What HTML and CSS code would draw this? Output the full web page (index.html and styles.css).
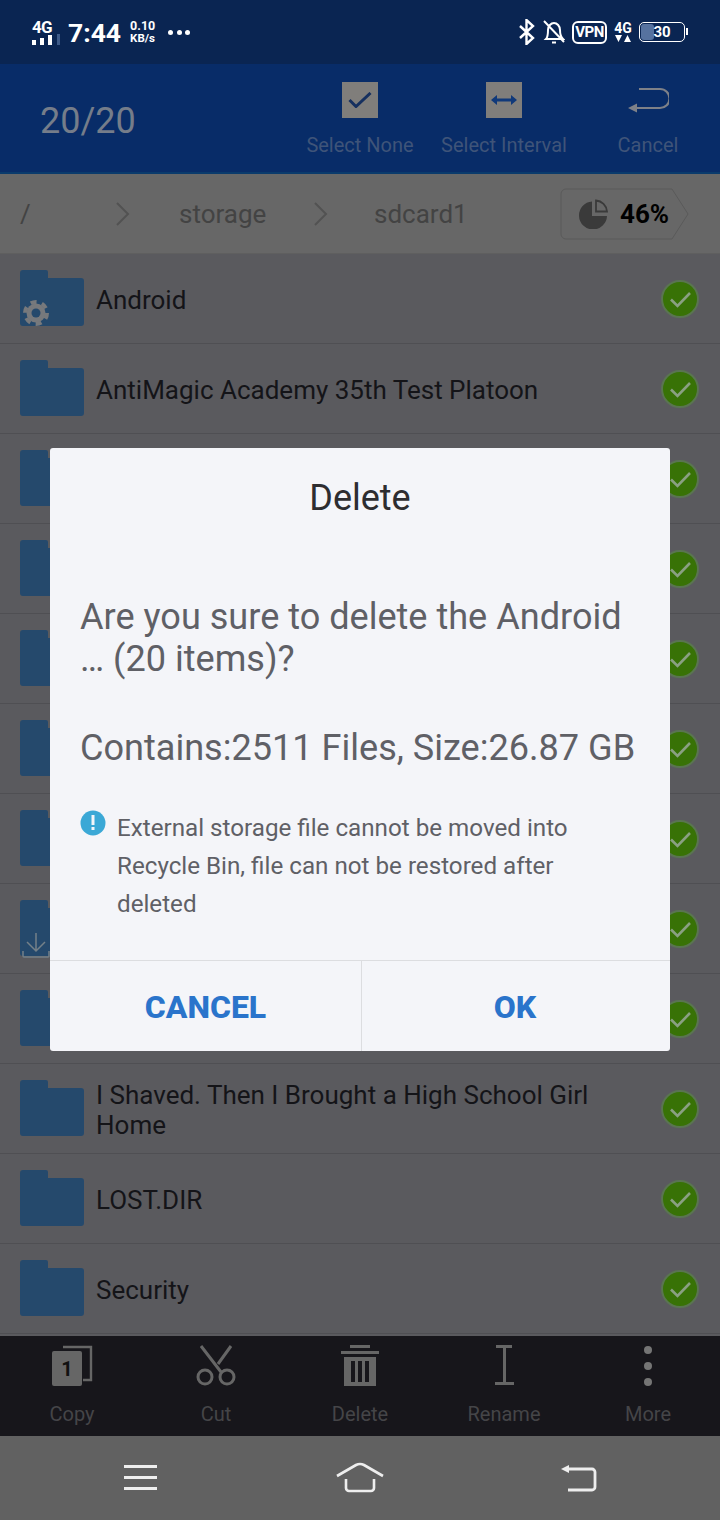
FILE: index.html
```html
<!DOCTYPE html>
<html lang="en">
<head>
  <meta charset="UTF-8">
  <meta name="viewport" content="width=device-width, initial-scale=1">
  <title>File manager - Delete</title>
  <link rel="stylesheet" href="styles.css">
</head>
<body>
  <svg class="defs" width="0" height="0">
    <symbol id="folder" viewBox="0 0 64 56">
      <path d="M3 0h23a2 2 0 0 1 2 2v6h33a3 3 0 0 1 3 3v42a3 3 0 0 1-3 3H3a3 3 0 0 1-3-3V3a3 3 0 0 1 3-3z" fill="#25496c"/>
    </symbol>
    <symbol id="tick" viewBox="0 0 38 38">
      <circle cx="19" cy="19" r="18" fill="#387206" stroke="#5a7551" stroke-width="2"/>
      <path d="M10 19.500l6.500 6.500L29 13" fill="none" stroke="#8aa082" stroke-width="2.600"/>
    </symbol>
  </svg>

  <div class="phone">
    <!-- STATUS BAR -->
    <div class="status">
      <div class="net">
        <span class="net-label">4G</span>
        <svg width="28" height="11" viewBox="0 0 28 11">
          <rect x="0" y="6" width="4" height="5" fill="#fff"/>
          <rect x="8" y="4" width="4" height="7" fill="#fff"/>
          <rect x="16" y="1" width="4" height="10" fill="#fff"/>
          <rect x="25" y="0" width="3" height="11" fill="#3d5a88"/>
        </svg>
      </div>
      <span class="clock">7:44</span>
      <div class="speed"><span>0.10</span><span class="speed-unit">KB/s</span></div>
      <div class="dots"><i></i><i></i><i></i></div>
      <div class="status-right">
        <svg width="18" height="26" viewBox="0 0 18 26" fill="none" stroke="#fff" stroke-width="2.400">
          <path d="M2 7l13 12-6.500 6V1L15 7 2 19"/>
        </svg>
        <svg width="22" height="26" viewBox="0 0 22 26" fill="none" stroke="#fff" stroke-width="2">
          <path d="M3 20c2-2 2-4 2-9 0-4 3-7 6-7s6 3 6 7c0 5 1 7 3 9zM9 23.500h4M1 2l20 21"/>
        </svg>
        <span class="vpn">VPN</span>
        <div class="net-small">
          <span>4G</span>
          <svg width="18" height="7" viewBox="0 0 18 7"><path d="M1 0h7L4.500 7zM10 7h7l-3.500-7z" fill="#fff"/></svg>
        </div>
        <div class="battery"><div class="battery-fill"></div><span class="battery-num">30</span></div>
      </div>
    </div>

    <!-- SELECTION TOOLBAR -->
    <div class="toolbar">
      <div class="count">20/20</div>
      <div class="tool">
        <div class="tool-box">
          <svg width="24" height="16" viewBox="0 0 24 16" fill="none" stroke="#16305f" stroke-width="3"><path d="M1.500 8l6.500 6.500L22.500 1"/></svg>
        </div>
        <span>Select None</span>
      </div>
      <div class="tool">
        <div class="tool-box">
          <svg width="26" height="10" viewBox="0 0 26 10" fill="#10397a"><path d="M0 5l6-5v3.500h14V0l6 5-6 5V6.500H6V10z"/></svg>
        </div>
        <span>Select Interval</span>
      </div>
      <div class="tool">
        <svg class="tool-icon" width="42" height="36" viewBox="0 0 42 36" fill="none" stroke="#7e8188" stroke-width="2.200">
          <path d="M8 26h25a9.500 9.500 0 0 0 0-19H12"/>
          <path d="M1 26l9-4.500v9z" fill="#7e8188" stroke="none"/>
        </svg>
        <span>Cancel</span>
      </div>
    </div>

    <!-- BREADCRUMB -->
    <div class="crumbs">
      <span class="crumb crumb-root">/</span>
      <svg class="chev" width="14" height="24" viewBox="0 0 14 24" fill="none" stroke="#525252" stroke-width="2"><path d="M1 1l11 11L1 23"/></svg>
      <span class="crumb crumb-storage">storage</span>
      <svg class="chev" width="14" height="24" viewBox="0 0 14 24" fill="none" stroke="#525252" stroke-width="2"><path d="M1 1l11 11L1 23"/></svg>
      <span class="crumb crumb-card">sdcard1</span>
      <div class="usage">
        <svg class="usage-tag" width="130" height="52" viewBox="0 0 130 52" fill="none" stroke="#5a5a5a" stroke-width="1">
          <path d="M6 1h106l16 25-16 25H6a5 5 0 0 1-5-5V6a5 5 0 0 1 5-5z"/>
        </svg>
        <svg width="30" height="30" viewBox="0 0 30 30">
          <path d="M13 2.500A14 14 0 1 0 28 17H13z" fill="#3a3a3a"/>
          <path d="M17 1.500v11h11A12 12 0 0 0 17 1.500z" fill="none" stroke="#3a3a3a" stroke-width="1.800"/>
        </svg>
        <span class="usage-num">46%</span>
      </div>
    </div>

    <!-- FILE LIST -->
    <div class="list">
      <div class="row">
        <div class="folder">
          <svg width="64" height="56"><use href="#folder"/></svg>
          <svg class="badge-gear" width="28" height="28" viewBox="0 0 28 28">
            <circle cx="14" cy="14" r="9.500" fill="#77797c"/>
            <circle cx="14" cy="14" r="11" fill="none" stroke="#77797c" stroke-width="4" stroke-dasharray="6 5.520"/>
            <circle cx="14" cy="14" r="4.500" fill="#25496c"/>
          </svg>
        </div>
        <span class="name">Android</span>
        <svg class="tick" width="38" height="38"><use href="#tick"/></svg>
      </div>
      <div class="row">
        <div class="folder"><svg width="64" height="56"><use href="#folder"/></svg></div>
        <span class="name">AntiMagic Academy 35th Test Platoon</span>
        <svg class="tick" width="38" height="38"><use href="#tick"/></svg>
      </div>
      <div class="row">
        <div class="folder"><svg width="64" height="56"><use href="#folder"/></svg></div>
        <span class="name"></span>
        <svg class="tick" width="38" height="38"><use href="#tick"/></svg>
      </div>
      <div class="row">
        <div class="folder"><svg width="64" height="56"><use href="#folder"/></svg></div>
        <span class="name"></span>
        <svg class="tick" width="38" height="38"><use href="#tick"/></svg>
      </div>
      <div class="row">
        <div class="folder"><svg width="64" height="56"><use href="#folder"/></svg></div>
        <span class="name"></span>
        <svg class="tick" width="38" height="38"><use href="#tick"/></svg>
      </div>
      <div class="row">
        <div class="folder"><svg width="64" height="56"><use href="#folder"/></svg></div>
        <span class="name"></span>
        <svg class="tick" width="38" height="38"><use href="#tick"/></svg>
      </div>
      <div class="row">
        <div class="folder"><svg width="64" height="56"><use href="#folder"/></svg></div>
        <span class="name"></span>
        <svg class="tick" width="38" height="38"><use href="#tick"/></svg>
      </div>
      <div class="row">
        <div class="folder">
          <svg width="64" height="56"><use href="#folder"/></svg>
          <svg class="badge-down" width="28" height="26" viewBox="0 0 28 26" fill="none" stroke="#748088" stroke-width="1.500">
            <path d="M14 1v18M5 10l9 9 9-9M1 19v5a1 1 0 0 0 1 1h24a1 1 0 0 0 1-1v-5"/>
          </svg>
        </div>
        <span class="name"></span>
        <svg class="tick" width="38" height="38"><use href="#tick"/></svg>
      </div>
      <div class="row">
        <div class="folder"><svg width="64" height="56"><use href="#folder"/></svg></div>
        <span class="name"></span>
        <svg class="tick" width="38" height="38"><use href="#tick"/></svg>
      </div>
      <div class="row">
        <div class="folder"><svg width="64" height="56"><use href="#folder"/></svg></div>
        <span class="name">I Shaved. Then I Brought a High School Girl Home</span>
        <svg class="tick" width="38" height="38"><use href="#tick"/></svg>
      </div>
      <div class="row">
        <div class="folder"><svg width="64" height="56"><use href="#folder"/></svg></div>
        <span class="name">LOST.DIR</span>
        <svg class="tick" width="38" height="38"><use href="#tick"/></svg>
      </div>
      <div class="row">
        <div class="folder"><svg width="64" height="56"><use href="#folder"/></svg></div>
        <span class="name">Security</span>
        <svg class="tick" width="38" height="38"><use href="#tick"/></svg>
      </div>
    </div>

    <!-- BOTTOM ACTIONS -->
    <div class="actions">
      <div class="action">
        <svg width="44" height="44" viewBox="0 0 44 44">
          <path d="M13 2h28v33h-8" fill="none" stroke="#666" stroke-width="2.400"/>
          <rect x="2" y="6" width="30" height="35" rx="2" fill="#666"/>
          <text class="copy-num" x="17" y="31" text-anchor="middle">1</text>
        </svg>
        <span>Copy</span>
      </div>
      <div class="action">
        <svg width="44" height="44" viewBox="0 0 44 44" fill="none" stroke="#666" stroke-width="3">
          <path d="M7 1l20 26M37 1L24 19"/>
          <circle cx="11" cy="32" r="7"/>
          <circle cx="33" cy="32" r="7"/>
        </svg>
        <span>Cut</span>
      </div>
      <div class="action">
        <svg width="44" height="44" viewBox="0 0 44 44" fill="#666">
          <rect x="12" y="0" width="20" height="3"/>
          <rect x="3" y="6" width="38" height="3"/>
          <path d="M6 12h32v29H6zM13 16v21h4V16zM20 16v21h4V16zM27 16v21h4V16z" fill-rule="evenodd"/>
        </svg>
        <span>Delete</span>
      </div>
      <div class="action">
        <svg width="44" height="44" viewBox="0 0 44 44" fill="#666">
          <rect x="14" y="0" width="16" height="3"/>
          <rect x="21" y="1" width="3" height="38"/>
          <rect x="13" y="37" width="19" height="3"/>
        </svg>
        <span>Rename</span>
      </div>
      <div class="action">
        <svg width="44" height="44" viewBox="0 0 44 44" fill="#757575">
          <circle cx="22" cy="5" r="4"/>
          <circle cx="22" cy="21" r="4"/>
          <circle cx="22" cy="37" r="4"/>
        </svg>
        <span>More</span>
      </div>
    </div>

    <!-- NAV BAR -->
    <div class="nav">
      <svg class="nav-menu" width="34" height="26" viewBox="0 0 34 26" fill="#eee">
        <rect y="0" width="33" height="3"/>
        <rect y="11" width="33" height="3"/>
        <rect y="22" width="33" height="3"/>
      </svg>
      <svg width="50" height="34" viewBox="0 0 50 34" fill="none" stroke="#eee" stroke-width="2.600">
        <path d="M2 15L21 4q4-2 8 0l19 11"/>
        <path d="M11 18v9a3 3 0 0 0 3 3h22a3 3 0 0 0 3-3v-9"/>
      </svg>
      <svg width="38" height="30" viewBox="0 0 38 30" fill="none" stroke="#eee" stroke-width="2.800">
        <path d="M4 6h27a3 3 0 0 1 3 3v15a3 3 0 0 1-3 3H7"/>
        <path d="M0 6l8-4v8z" fill="#eee" stroke="none"/>
      </svg>
    </div>

    <!-- DELETE DIALOG -->
    <div class="overlay">
      <div class="dialog">
        <div class="dialog-title">Delete</div>
        <div class="dialog-body">
          <p class="question">Are you sure to delete the Android<br>… (20 items)?</p>
          <p class="contains">Contains:2511 Files, Size:26.87 GB</p>
          <div class="warning">
            <svg class="warning-icon" width="26" height="26" viewBox="0 0 26 26">
              <circle cx="13" cy="13" r="12.500" fill="#3ba8d6"/>
              <rect x="11.500" y="5" width="3" height="10" fill="#f4f5f9"/>
              <rect x="11.500" y="17" width="3" height="3" fill="#f4f5f9"/>
            </svg>
            <p>External storage file cannot be moved into Recycle Bin, file can not be restored after deleted</p>
          </div>
        </div>
        <div class="dialog-buttons">
          <div class="btn btn-cancel">CANCEL</div>
          <div class="btn btn-ok">OK</div>
        </div>
      </div>
    </div>
  </div>
</body>
</html>
```

FILE: styles.css
```css
/* Global */
* {
  box-sizing: border-box;
}
body {
  margin: 0;
  font-family: Roboto, "Liberation Sans", sans-serif;
  background: #5a5a5e;
}
p {
  margin: 0;
}
svg {
  display: block;
  flex: none;
}
.defs {
  position: absolute;
}
.phone {
  position: relative;
  width: 720px;
  height: 1520px;
  display: flex;
  flex-direction: column;
  overflow: hidden;
}

/* STATUS BAR */
.status {
  height: 64px;
  background: #0a2552;
  color: #fff;
  display: flex;
  align-items: center;
  padding: 0 35px 0 32px;
}
.net {
  width: 28px;
  display: flex;
  flex-direction: column;
}
.net-label {
  font-size: 17px;
  font-weight: 700;
  line-height: 14px;
  letter-spacing: -0.8px;
}
.clock {
  margin-left: 8px;
  font-size: 26.500px;
  font-weight: 700;
}
.speed {
  margin-left: 9px;
  display: flex;
  flex-direction: column;
  font-size: 12.500px;
  font-weight: 700;
  line-height: 13px;
}
.speed-unit {
  font-size: 11.500px;
}
.dots {
  margin-left: 13px;
  display: flex;
  gap: 3.500px;
}
.dots i {
  width: 5px;
  height: 5px;
  border-radius: 50%;
  background: #fff;
}
.status-right {
  margin-left: auto;
  display: flex;
  align-items: center;
  gap: 7px;
}
.vpn {
  width: 35px;
  text-align: center;
  border: 2px solid #fff;
  border-radius: 6px;
  font-size: 15px;
  font-weight: 700;
  line-height: 19px;
  letter-spacing: -0.5px;
}
.net-small {
  display: flex;
  flex-direction: column;
  align-items: center;
  font-size: 14px;
  font-weight: 700;
  line-height: 13px;
}
.battery {
  position: relative;
  width: 46px;
  height: 20px;
  border: 1.500px solid #fff;
  border-radius: 5px;
  display: flex;
  align-items: center;
  justify-content: center;
}
.battery::after {
  content: "";
  position: absolute;
  right: -4px;
  top: 5px;
  width: 2px;
  height: 7px;
  background: #fff;
}
.battery-fill {
  position: absolute;
  left: 1px;
  top: 1px;
  bottom: 1px;
  width: 13px;
  background: #56729f;
  border-radius: 3px;
}
.battery-num {
  position: relative;
  font-size: 15px;
  font-weight: 700;
}

/* SELECTION TOOLBAR */
.toolbar {
  height: 110px;
  background: #082c68;
  border-bottom: 2px solid #0a3b6c;
  display: flex;
  padding-left: 40px;
}
.count {
  flex: 1;
  align-self: center;
  font-size: 36px;
  color: #757d8a;
  margin-top: 6px;
}
.tool {
  width: 144px;
  display: flex;
  flex-direction: column;
  align-items: center;
  padding-top: 18px;
  font-size: 20px;
  color: #3f5479;
  white-space: nowrap;
}
.tool-box {
  width: 36px;
  height: 36px;
  background: #807e7b;
  display: flex;
  align-items: center;
  justify-content: center;
}
.tool span {
  margin-top: 15px;
}

/* BREADCRUMB */
.crumbs {
  position: relative;
  height: 80px;
  background: #676767;
  display: flex;
  align-items: center;
  padding-left: 20px;
  font-size: 26px;
  color: #434343;
  border-bottom: 1px solid #5f5f5f;
}
.crumb-root {
  width: 96px;
}
.crumb-storage {
  margin-left: 49px;
  width: 88px;
}
.crumb-card {
  margin-left: 46px;
}
.crumbs .chev:nth-of-type(2) {
  margin-left: 47px;
}
.usage {
  position: relative;
  margin-left: auto;
  margin-right: 30px;
  width: 130px;
  height: 52px;
  display: flex;
  align-items: center;
  padding-left: 19px;
  gap: 11px;
}
.usage-tag {
  position: absolute;
  left: 0;
  top: 0;
}
.usage-num {
  font-size: 26px;
  font-weight: 700;
  color: #000;
}

/* FILE LIST */
.list {
  flex: 1;
  background: #5a5a5e;
  overflow: hidden;
}
.row {
  height: 90px;
  display: flex;
  align-items: center;
  padding: 0 21px 0 20px;
  border-bottom: 1px solid #4f4f53;
}
.folder {
  position: relative;
  width: 64px;
  height: 56px;
  margin: -2px 12px 0 0;
  flex: none;
}
.badge-gear {
  position: absolute;
  left: 2px;
  bottom: -1px;
}
.badge-down {
  position: absolute;
  left: 2px;
  bottom: -2px;
}
.name {
  flex: 1;
  margin-top: 2px;
  font-size: 26px;
  line-height: 30px;
  color: #141418;
  padding-right: 60px;
}
.tick {
  margin-left: auto;
  margin-top: 0;
}

/* BOTTOM ACTIONS */
.actions {
  height: 100px;
  background: #17161b;
  display: grid;
  grid-template-columns: repeat(5, 1fr);
}
.action {
  display: flex;
  flex-direction: column;
  align-items: center;
  padding-top: 9px;
  font-size: 20px;
  color: #454548;
}
.action span {
  margin-top: 13px;
}
.copy-num {
  font-family: Roboto, sans-serif;
  font-size: 20px;
  font-weight: 700;
  fill: #111;
}

/* NAV BAR */
.nav {
  height: 84px;
  background: #616161;
  display: grid;
  grid-template-columns: repeat(3, 220px);
  justify-content: center;
  justify-items: center;
  align-items: center;
}
.nav-menu {
  margin-left: 2px;
}

/* DELETE DIALOG */
.overlay {
  position: absolute;
  inset: 0;
  display: flex;
  justify-content: center;
  align-items: flex-start;
  padding-top: 448px;
}
.dialog {
  width: 620px;
  height: 603px;
  background: #f4f5f9;
  border-radius: 3px;
  display: flex;
  flex-direction: column;
}
.dialog-title {
  height: 98px;
  padding-top: 29px;
  text-align: center;
  font-size: 36px;
  line-height: 42px;
  color: #2d2d30;
}
.dialog-body {
  flex: 1;
  padding: 50px 30px 0;
  color: #5f6066;
}
.question {
  font-size: 36.100px;
  line-height: 42px;
  white-space: nowrap;
}
.contains {
  margin-top: 47px;
  font-size: 36.100px;
  line-height: 42px;
  white-space: nowrap;
}
.warning {
  margin-top: 40px;
  display: flex;
  gap: 11px;
  font-size: 24.200px;
  line-height: 38px;
  padding-right: 30px;
}
.warning-icon {
  margin-top: 1px;
}
.dialog-buttons {
  height: 91px;
  display: flex;
  border-top: 1px solid #dcdde0;
}
.btn {
  flex: 1;
  display: flex;
  align-items: center;
  justify-content: center;
  padding-top: 2px;
  font-size: 32px;
  font-weight: 800;
  color: #2a74cb;
}
.btn-cancel {
  flex: none;
  width: 312px;
  border-right: 1px solid #dcdde0;
}
.btn-ok {
  padding-right: 2px;
}
```
